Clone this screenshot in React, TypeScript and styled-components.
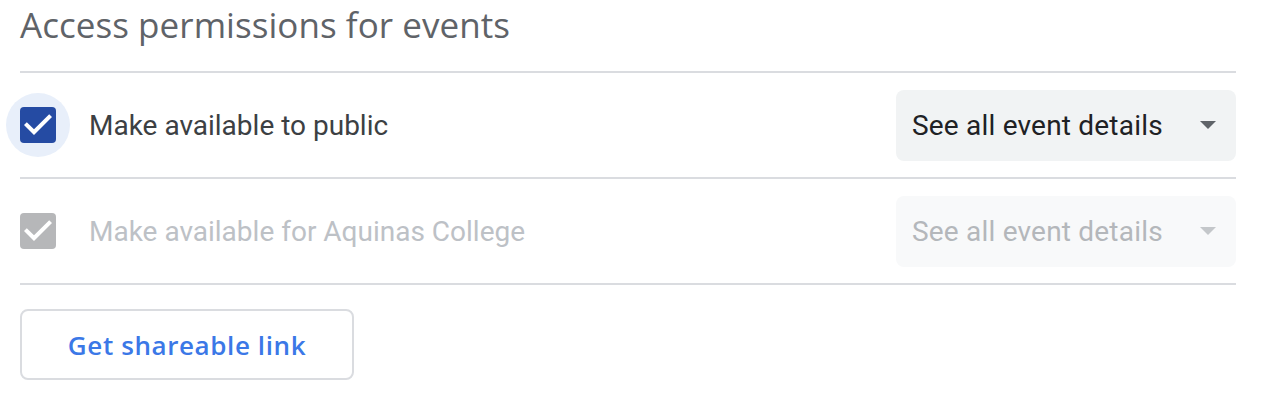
import styled, { createGlobalStyle } from 'styled-components';

const GlobalStyle = createGlobalStyle`
  body {
    margin: 0;
    background: #ffffff;
    font-family: Roboto, 'Liberation Sans', Arial, sans-serif;
  }
`;

const Page = styled.div`
  width: 1216px;
  padding: 0 20px;
`;

const Heading = styled.h2`
  margin: 0;
  height: 71px;
  padding-top: 3px;
  box-sizing: border-box;
  font-family: 'Open Sans', Roboto, sans-serif;
  font-size: 35px;
  line-height: 44px;
  font-weight: 400;
  letter-spacing: 0.05px;
  color: #5f6368;
`;

const Row = styled.div`
  display: flex;
  align-items: center;
  height: 104px;
  border-top: 2px solid #dadce0;
  &:last-of-type {
    border-bottom: 2px solid #dadce0;
  }
`;

const BoxWrap = styled.span`
  position: relative;
  z-index: 0;
  display: flex;
`;

const Box = styled.span<{ $active: boolean }>`
  position: relative;
  flex-shrink: 0;
  width: 36px;
  height: 36px;
  border-radius: 4px;
  background: ${(p) => (p.$active ? '#254ba3' : '#b6b7b9')};
  display: flex;
  &::before {
    content: '';
    display: ${(p) => (p.$active ? 'block' : 'none')};
    position: absolute;
    left: -14px;
    top: -14px;
    width: 64px;
    height: 64px;
    border-radius: 50%;
    background: #e8effa;
    z-index: -1;
  }
`;

const Label = styled.span<{ $active: boolean }>`
  flex: 1;
  margin-left: 33px;
  font-size: 28px;
  color: ${(p) => (p.$active ? '#3c4043' : '#bdc1c6')};
`;

const Select = styled.div<{ $active: boolean }>`
  width: 340px;
  height: 71px;
  box-sizing: border-box;
  padding: 0 20px 0 16px;
  border-radius: 8px;
  background: ${(p) => (p.$active ? '#f1f3f4' : '#f8f9fa')};
  display: flex;
  align-items: center;
  justify-content: space-between;
  font-size: 28px;
  letter-spacing: 0.2px;
  color: ${(p) => (p.$active ? '#202124' : '#b4b7bb')};
`;

const Arrow = styled.span<{ $active: boolean }>`
  width: 0;
  height: 0;
  border-left: 8px solid transparent;
  border-right: 8px solid transparent;
  border-top: 8px solid ${(p) => (p.$active ? '#5f6368' : '#c4c7ca')};
`;

const ShareButton = styled.button`
  margin-top: 24px;
  width: 334px;
  height: 71px;
  border: 2px solid #dadce0;
  border-radius: 8px;
  background: #ffffff;
  font-family: 'Open Sans', Roboto, sans-serif;
  font-size: 26px;
  font-weight: 600;
  letter-spacing: 0.6px;
  color: #3b78e7;
`;

type RowProps = { label: string; active: boolean };

function PermissionRow({ label, active }: RowProps) {
  return (
    <Row>
      <BoxWrap>
        <Box $active={active}>
          <svg width="36" height="36" viewBox="3 3 18 18">
            <path
              d="M10 17l-5-5 1.41-1.41L10 14.17l7.59-7.59L19 8l-9 9z"
              fill="#ffffff"
            />
          </svg>
        </Box>
      </BoxWrap>
      <Label $active={active}>{label}</Label>
      <Select $active={active}>
        See all event details
        <Arrow $active={active} />
      </Select>
    </Row>
  );
}

export default function App() {
  return (
    <Page>
      <GlobalStyle />
      <Heading>Access permissions for events</Heading>
      <PermissionRow label="Make available to public" active={true} />
      <PermissionRow label="Make available for Aquinas College" active={false} />
      <ShareButton>Get shareable link</ShareButton>
    </Page>
  );
}
